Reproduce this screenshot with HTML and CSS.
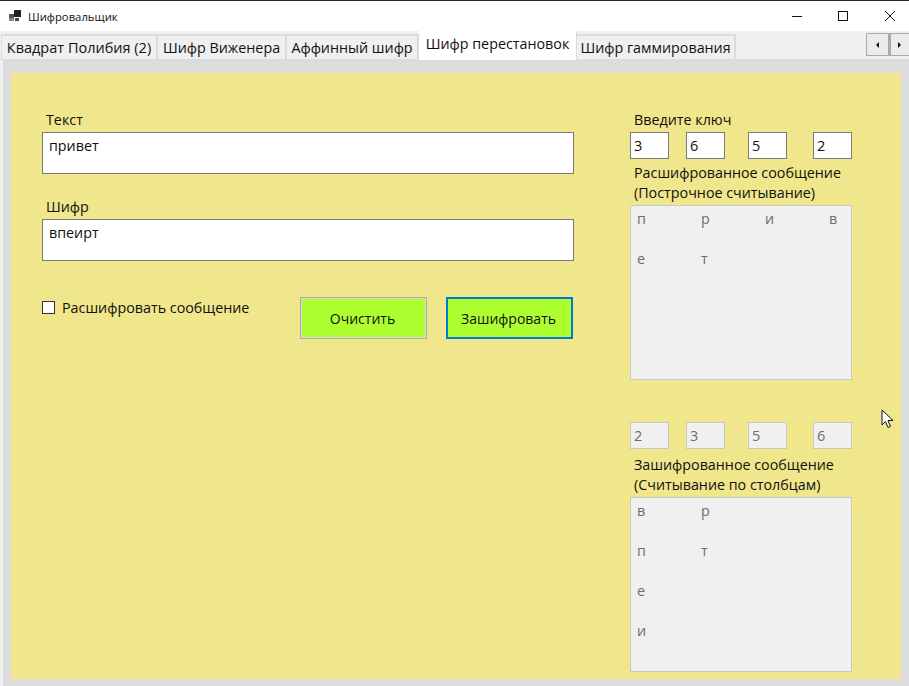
FILE: index.html
```html
<!DOCTYPE html>
<html lang="ru">
<head>
  <meta charset="UTF-8">
  <title>Шифровальщик</title>
  <link rel="stylesheet" href="styles.css">
</head>
<body>
  <div class="window">
    <div class="titlebar">
      <svg class="app-icon" width="12" height="12" viewBox="0 0 12 12">
        <rect x="0" y="4" width="5" height="4" fill="#555"/>
        <rect x="5" y="0" width="7" height="7" fill="#222"/>
        <rect x="0" y="8" width="5" height="3" fill="#888"/>
        <rect x="6" y="8" width="4" height="3" fill="#444"/>
      </svg>
      <span class="title-text">Шифровальщик</span>
      <div class="win-buttons">
        <svg width="46" height="30" viewBox="0 0 46 30"><path d="M17 15.5h10" stroke="#111" fill="none"/></svg>
        <svg width="46" height="30" viewBox="0 0 46 30"><rect x="17.5" y="10.5" width="9" height="9" stroke="#111" fill="none"/></svg>
        <svg width="46" height="30" viewBox="0 0 46 30"><path d="M18 10l10 10M28 10l-10 10" stroke="#111" fill="none"/></svg>
      </div>
    </div>

    <div class="tabstrip">
      <div class="tab tab-1">Квадрат Полибия (2)</div>
      <div class="tab tab-2">Шифр Виженера</div>
      <div class="tab tab-3">Аффинный шифр</div>
      <div class="tab active">Шифр перестановок</div>
      <div class="tab tab-5">Шифр гаммирования</div>
      <div class="tab-scroll">
        <button class="scroll-btn"><svg width="4" height="6" viewBox="0 0 4 6"><path d="M3 0v6L0 3z" fill="#111"/></svg></button>
        <button class="scroll-btn"><svg width="4" height="6" viewBox="0 0 4 6"><path d="M0 0v6l3-3z" fill="#111"/></svg></button>
      </div>
    </div>

    <div class="tabpage">
      <div class="panel">
        <div class="left">
          <label class="field-label">Текст</label>
          <div class="textbox">привет</div>
          <label class="field-label second">Шифр</label>
          <div class="textbox">впеирт</div>
          <div class="actions">
            <div class="check">
              <span class="checkbox"></span>
              <span>Расшифровать сообщение</span>
            </div>
            <button class="btn btn-clear">Очистить</button>
            <button class="btn btn-go">Зашифровать</button>
          </div>
        </div>

        <div class="right">
          <div class="right-label">Введите ключ</div>
          <div class="keys">
            <div class="key">3</div>
            <div class="key">6</div>
            <div class="key">5</div>
            <div class="key">2</div>
          </div>
          <div class="right-label two-line">Расшифрованное сообщение<br>(Построчное считывание)</div>
          <div class="matrix">
            <span>п</span><span>р</span><span>и</span><span>в</span>
            <span>е</span><span>т</span>
          </div>

          <div class="keys off">
            <div class="key">2</div>
            <div class="key">3</div>
            <div class="key">5</div>
            <div class="key">6</div>
          </div>
          <div class="right-label two-line encoded">Зашифрованное сообщение<br>(Считывание по столбцам)</div>
          <div class="matrix">
            <span>в</span><span>р</span><span></span><span></span>
            <span>п</span><span>т</span><span></span><span></span>
            <span>е</span><span></span><span></span><span></span>
            <span>и</span>
          </div>
        </div>
      </div>
    </div>

    <svg class="cursor" width="13" height="20" viewBox="0 0 13 20">
      <path d="M1 1v15l3.5-3.5 2.5 6 2.5-1-2.5-6h5z" fill="#fff" stroke="#111"/>
    </svg>
  </div>
</body>
</html>
```

FILE: styles.css
```css
* { box-sizing: border-box; }

html, body {
  margin: 0;
  padding: 0;
  height: 100%;
  overflow: hidden;
}

body {
  font-family: "Open Sans", "Noto Sans", sans-serif;
  font-size: 14.3px;
  color: #111;
  background: #dcdcdc;
}

.window {
  position: relative;
  width: 909px;
  height: 686px;
  display: flex;
  flex-direction: column;
}

.titlebar {
  height: 31px;
  flex: none;
  display: flex;
  align-items: center;
  background: #fff;
  border-top: 1px solid #2a2a2a;
  padding-left: 9px;
}

.title-text {
  margin-left: 7px;
  font-size: 11.3px;
  color: #111;
}

.win-buttons {
  margin-left: auto;
  display: flex;
  margin-right: -4px;
}

.win-buttons svg { display: block; }

.tabstrip {
  height: 29px;
  flex: none;
  display: flex;
  align-items: flex-end;
  background: #f0f0f0;
  padding-left: 1px;
  border-bottom: 1px solid #dcdcdc;
}

.tab {
  height: 26px;
  margin-bottom: -1px;
  font-size: 14.3px;
  line-height: 24px;
  text-align: center;
  white-space: nowrap;
  background: #f0f0f0;
  border: 2px solid #dcdcdc;
  border-left-width: 0;
  border-bottom-width: 1px;
}

.tab-1 { width: 157px; border-left-width: 1px; font-size: 14.5px; }
.tab-2 { width: 129px; }
.tab-3 { width: 132px; }
.tab-5 { width: 159px; }

.tab.active {
  width: 158px;
  height: 29px;
  line-height: 26px;
  background: #fff;
  border: 0;
  border-right: 1px solid #dcdcdc;
  margin-bottom: -1px;
  position: relative;
}

.tab-scroll {
  margin-left: auto;
  align-self: flex-start;
  margin-top: 2px;
  display: flex;
}

.scroll-btn {
  width: 23px;
  height: 23px;
  padding: 0;
  display: flex;
  align-items: center;
  justify-content: center;
  background: #ebebeb;
  border: 1px solid #aaa;
}

.scroll-btn + .scroll-btn { border-left-width: 2px; width: 20px; border-right: 0; }

.tabpage {
  flex: 1;
  padding: 13px 8px 7px 11px;
  background: #dcdcdc;
  min-height: 0;
  box-shadow: inset 3px 0 0 #f0f0f0;
}

.panel {
  height: 100%;
  display: flex;
  background: #f0e68c;
  padding-left: 31px;
}

.left {
  width: 532px;
  padding-top: 37px;
  flex: none;
}

.field-label {
  display: block;
  height: 22px;
  padding-left: 4px;
  line-height: 20px;
}

.field-label.second { margin-top: 23px; }

.textbox {
  height: 42px;
  padding: 3px 6px;
  line-height: 20px;
  background: #fff;
  border: 1px solid #7a7a7a;
}

.actions {
  display: flex;
  align-items: flex-start;
  margin-top: 36px;
}

.check {
  width: 258px;
  display: flex;
  align-items: center;
  height: 20px;
}

.checkbox {
  width: 13px;
  height: 13px;
  margin: 1px 7px 0 0;
  background: #fff;
  border: 1px solid #333;
}

.btn {
  width: 127px;
  height: 42px;
  padding: 0 2px 0 0;
  font-family: inherit;
  font-size: 14px;
  color: #111;
  background: #adff2f;
  border: 2px solid #b4b4b4;
}

.btn-clear {
  border: 2px solid #dcdcdc;
  outline: 1px solid #aaa;
  outline-offset: -1px;
}

.btn-go {
  margin-left: 19px;
  border: 2px solid #0078d7;
}

.right {
  width: 222px;
  margin-left: 56px;
  padding-top: 37px;
  flex: none;
}

.right-label {
  padding-left: 4px;
  line-height: 20px;
  height: 22px;
}

.keys {
  display: flex;
  height: 27px;
}

.key {
  width: 39px;
  height: 27px;
  padding-left: 3px;
  line-height: 25px;
  background: #fff;
  border: 1px solid #7a7a7a;
  font-size: 14.5px;
}

.key:nth-child(2) { margin-left: 17px; }
.key:nth-child(3) { margin-left: 23px; }
.key:nth-child(4) { margin-left: 26px; }

.keys.off { margin-top: 42px; }

.keys.off .key {
  color: #6d6d6d;
  background: #f0f0f0;
  border-color: #c8c8c8;
}

.two-line {
  height: 46px;
  padding-top: 4px;
  line-height: 20px;
}

.two-line.encoded { height: 48px; padding-top: 6px; }

.matrix {
  display: grid;
  grid-template-columns: repeat(4, 64px);
  grid-auto-rows: 40px;
  align-content: start;
  height: 175px;
  padding: 3px 0 0 6px;
  color: #6d6d6d;
  background: #f0f0f0;
  border: 1px solid #c8c8c8;
}

.cursor {
  position: absolute;
  left: 881px;
  top: 409px;
}
```
